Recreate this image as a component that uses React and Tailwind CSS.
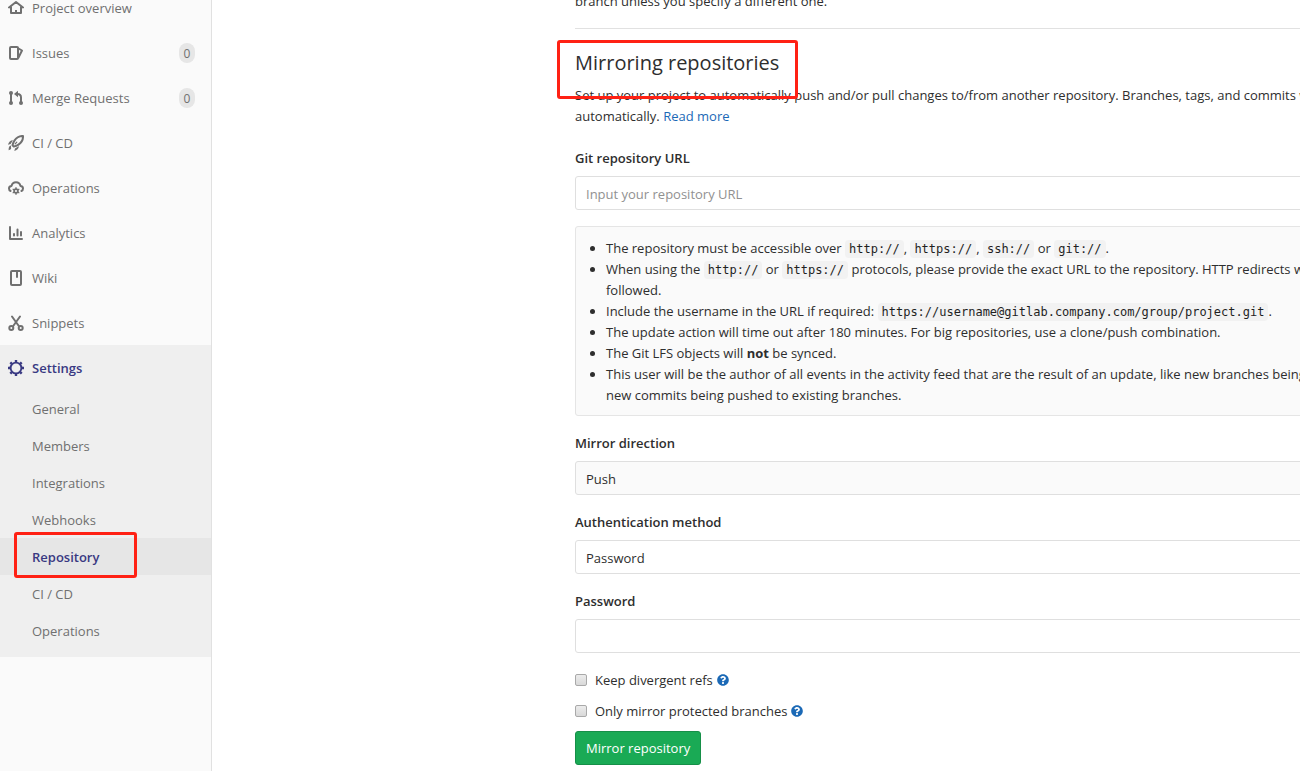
import React from "react";
import { FaQuestionCircle } from "react-icons/fa";

function Icon({ children }) {
  return (
    <svg
      viewBox="0 0 16 16"
      className="size-4 shrink-0"
      fill="none"
      stroke="currentColor"
      strokeWidth="2"
      strokeLinecap="round"
      strokeLinejoin="round"
      aria-hidden="true"
    >
      {children}
    </svg>
  );
}

const icons = {
  home: (
    <Icon>
      <path d="M1 7.500 8 2l7 5.500M3 7v6h10V7" />
      <path d="M8 10v3" strokeLinecap="butt" />
    </Icon>
  ),
  issues: (
    <Icon>
      <rect x="2" y="2" width="8" height="12" rx="1" />
      <path d="M10.500 3.500 14 5.500l-3.500 7" />
    </Icon>
  ),
  merge: (
    <Icon>
      <path d="M3 3v10M13 13V7.500C13 5.500 12 4 9.500 4" />
      <g fill="currentColor" stroke="none">
        <circle cx="3" cy="3" r="2" />
        <circle cx="3" cy="13" r="2" />
        <circle cx="13" cy="13" r="2" />
        <path d="M10 0.700v6.600L6 4z" />
      </g>
    </Icon>
  ),
  rocket: (
    <Icon>
      <path
        d="M15 1c-4-.2-6.600 1.600-8.600 4.600-1 1.500-1.600 3.200-1.900 4.700l1.300 1.300c1.500-.300 3.200-1 4.700-2C13.500 7.600 15.200 5 15 1z"
        strokeWidth="2"
      />
      <path d="m7.200 8.900 1.600-1.800" strokeWidth="1.200" />
      <path
        d="M5 5.300C2.400 5.300.600 7.200 0 9.800l2.600-.700zM10.900 11c0 2.600-2 4.400-4.600 5l.7-2.600zM3 10.500C1.300 10.800.600 12.300.600 15.200c.8-.1 1.800-.5 2.500-1.200z"
        fill="currentColor"
        stroke="none"
      />
    </Icon>
  ),
  operations: (
    <Icon>
      <path d="M2.600 11C1.600 10.600 1 9.600 1 8.500 1 7 2.200 6 3.600 5.900 4 3.700 5.800 2.200 8 2.200s4 1.500 4.400 3.700C13.800 6 15 7 15 8.500c0 1.100-.6 2.100-1.600 2.500" />
      <circle cx="8" cy="11" r="1.900" strokeWidth="1.700" />
      <path
        d="M8 7.700v.8M8 13.500v.8M5.100 9.300l.7.400M10.200 12.300l.7.400M5.100 12.700l.7-.4M10.200 9.700l.7-.4"
        strokeWidth="1.300"
      />
    </Icon>
  ),
  analytics: (
    <Icon>
      <path d="M2 2v12h12M6 9v1.500M9.500 4.500v6M13 7v3.500" />
    </Icon>
  ),
  wiki: (
    <Icon>
      <rect x="3" y="1" width="10" height="14" rx="1" />
      <path d="M9 2v5" />
    </Icon>
  ),
  snippets: (
    <Icon>
      <path d="M4 1.500 10.800 11M12 1.500 5.200 11" />
      <circle cx="3.300" cy="13" r="2" />
      <circle cx="12.700" cy="13" r="2" />
    </Icon>
  ),
  settings: (
    <Icon>
      <circle cx="8" cy="8" r="5.400" strokeWidth="1.900" />
      <path
        d="M8 0v2.200M8 13.800V16M0 8h2.200M13.800 8H16M2.300 2.300l1.500 1.500M12.200 12.200l1.500 1.500M2.300 13.700l1.500-1.500M12.200 3.800l1.500-1.500"
        strokeWidth="2.400"
        strokeLinecap="butt"
      />
    </Icon>
  ),
};

const navItems = [
  { label: "Project overview", icon: "home" },
  { label: "Issues", icon: "issues", count: 0 },
  { label: "Merge Requests", icon: "merge", count: 0 },
  { label: "CI / CD", icon: "rocket" },
  { label: "Operations", icon: "operations" },
  { label: "Analytics", icon: "analytics" },
  { label: "Wiki", icon: "wiki" },
  { label: "Snippets", icon: "snippets" },
];

const settingsItems = [
  "General",
  "Members",
  "Integrations",
  "Webhooks",
  "Repository",
  "CI / CD",
  "Operations",
];

function Sidebar() {
  return (
    <nav
      aria-label="Project"
      className="w-[212px] shrink-0 overflow-hidden border-r border-[#e1e1e1] bg-[#fafafa] text-[#707070]"
    >
      <ul className="-mt-[15px]">
        {navItems.map((item) => (
          <li key={item.label}>
            <a href="#" className="flex h-[45px] items-center gap-2 pr-4 pl-2">
              {icons[item.icon]}
              <span className="flex-1 pt-[2px]">{item.label}</span>
              {item.count !== undefined && (
                <span className="flex h-5 w-4 items-center justify-center rounded-full bg-[#e6e6e6] pt-[2px] text-xs">
                  {item.count}
                </span>
              )}
            </a>
          </li>
        ))}
        <li className="bg-[#efefef] pb-2">
          <a
            href="#"
            className="flex h-[45px] items-center gap-2 px-2 font-semibold text-[#393982]"
          >
            {icons.settings}
            <span className="pt-[2px]">Settings</span>
          </a>
          <ul>
            {settingsItems.map((label) =>
              label === "Repository" ? (
                <li key={label} className="relative bg-[#e6e6e6]">
                  <a
                    href="#"
                    aria-current="page"
                    className="flex h-[37px] items-center pt-[2px] pl-8 font-semibold text-[#393982]"
                  >
                    {label}
                  </a>
                  <span className="pointer-events-none absolute -top-[6px] left-[14px] h-[46px] w-[123px] rounded-[3px] border-3 border-[#ff2114]" />
                </li>
              ) : (
                <li key={label}>
                  <a href="#" className="flex h-[37px] items-center pt-[2px] pl-8">
                    {label}
                  </a>
                </li>
              )
            )}
          </ul>
        </li>
      </ul>
    </nav>
  );
}

function Code({ children }) {
  return (
    <code className="rounded bg-[#f2f2f2] px-1 py-[2px] font-['DejaVu_Sans_Mono',monospace] text-xs text-[#1f1f1f]">
      {children}
    </code>
  );
}

const controlClass =
  "block h-[34px] w-full appearance-none rounded-[3px] border border-[#dfdfdf] px-[10px] pt-[2px] text-[#2e2e2e] placeholder:text-[#919191]";

function Field({ id, label, children }) {
  return (
    <div className="mb-4">
      <label htmlFor={id} className="mb-[7px] block pt-[1px] font-semibold">
        {label}
      </label>
      {children}
    </div>
  );
}

function CheckRow({ id, label }) {
  return (
    <div className="mb-[9px] flex items-center">
      <input
        id={id}
        type="checkbox"
        className="size-3 appearance-none rounded-[2px] border border-[#a9a9a9] bg-linear-to-b from-[#ececec] to-[#d9d9d9] checked:from-[#1b69b6] checked:to-[#1b69b6]"
      />
      <label htmlFor={id} className="pt-[1px] pl-2">
        {label}
      </label>
      <a href="#" aria-label={`Help: ${label}`} className="ml-1 text-[#1b69b6]">
        <FaQuestionCircle className="size-3" />
      </a>
    </div>
  );
}

export default function App() {
  return (
    <div className="flex min-h-screen bg-white font-['Open_Sans',sans-serif] text-[13px] leading-[21px] text-[#2e2e2e]">
      <Sidebar />
      <main className="min-w-0 flex-1 overflow-hidden pb-[6px] pl-[363px]">
        <div className="w-[860px]">
          <p className="-mt-[9px] pb-4">branch unless you specify a different one.</p>
          <section className="border-t border-[#e1e1e1] pt-[22px]">
            <div className="relative">
              <h2 className="mb-[10px] text-xl leading-6 font-medium">
                Mirroring repositories
              </h2>
              <span className="pointer-events-none absolute -top-[11px] -left-[18px] h-[59px] w-[241px] rounded-[3px] border-3 border-[#ff2114]" />
            </div>
            <p className="mb-5">
              Set up your project to automatically push and/or pull changes to/from
              another repository. Branches, tags, and commits will be synced
              <br />
              automatically.{" "}
              <a href="#" className="text-[#1b69b6]">
                Read more
              </a>
            </p>
            <form onSubmit={(e) => e.preventDefault()}>
              <Field id="url" label="Git repository URL">
                <input
                  id="url"
                  type="text"
                  placeholder="Input your repository URL"
                  className={controlClass}
                />
              </Field>
              <div className="mb-4 rounded-[3px] border border-[#e5e5e5] bg-[#fafafa] pt-[11px] pr-4 pb-[9px] pl-[30px]">
                <ul className="list-disc">
                  <li>
                    The repository must be accessible over <Code>http://</Code>,{" "}
                    <Code>https://</Code>, <Code>ssh://</Code> or{" "}
                    <Code>git://</Code>.
                  </li>
                  <li>
                    When using the <Code>http://</Code> or <Code>https://</Code>{" "}
                    protocols, please provide the exact URL to the repository. HTTP
                    redirects will not be
                    <br />
                    followed.
                  </li>
                  <li>
                    Include the username in the URL if required:{" "}
                    <Code>https://username@gitlab.company.com/group/project.git</Code>.
                  </li>
                  <li>
                    The update action will time out after 180 minutes. For big
                    repositories, use a clone/push combination.
                  </li>
                  <li>
                    The Git LFS objects will <strong>not</strong> be synced.
                  </li>
                  <li>
                    This user will be the author of all events in the activity feed
                    that are the result of an update, like new branches being created
                    or
                    <br />
                    new commits being pushed to existing branches.
                  </li>
                </ul>
              </div>
              <Field id="direction" label="Mirror direction">
                <select id="direction" className={`${controlClass} bg-[#fafafa]`}>
                  <option>Push</option>
                </select>
              </Field>
              <Field id="auth" label="Authentication method">
                <select id="auth" className={`${controlClass} bg-white`}>
                  <option>Password</option>
                </select>
              </Field>
              <Field id="password" label="Password">
                <input id="password" type="password" className={controlClass} />
              </Field>
              <CheckRow id="divergent" label="Keep divergent refs" />
              <CheckRow id="protected" label="Only mirror protected branches" />
              <button
                type="submit"
                className="h-[34px] rounded-[3px] border border-[#168f48] bg-[#1aaa55] px-[10px] text-white"
              >
                Mirror repository
              </button>
            </form>
          </section>
        </div>
      </main>
    </div>
  );
}
